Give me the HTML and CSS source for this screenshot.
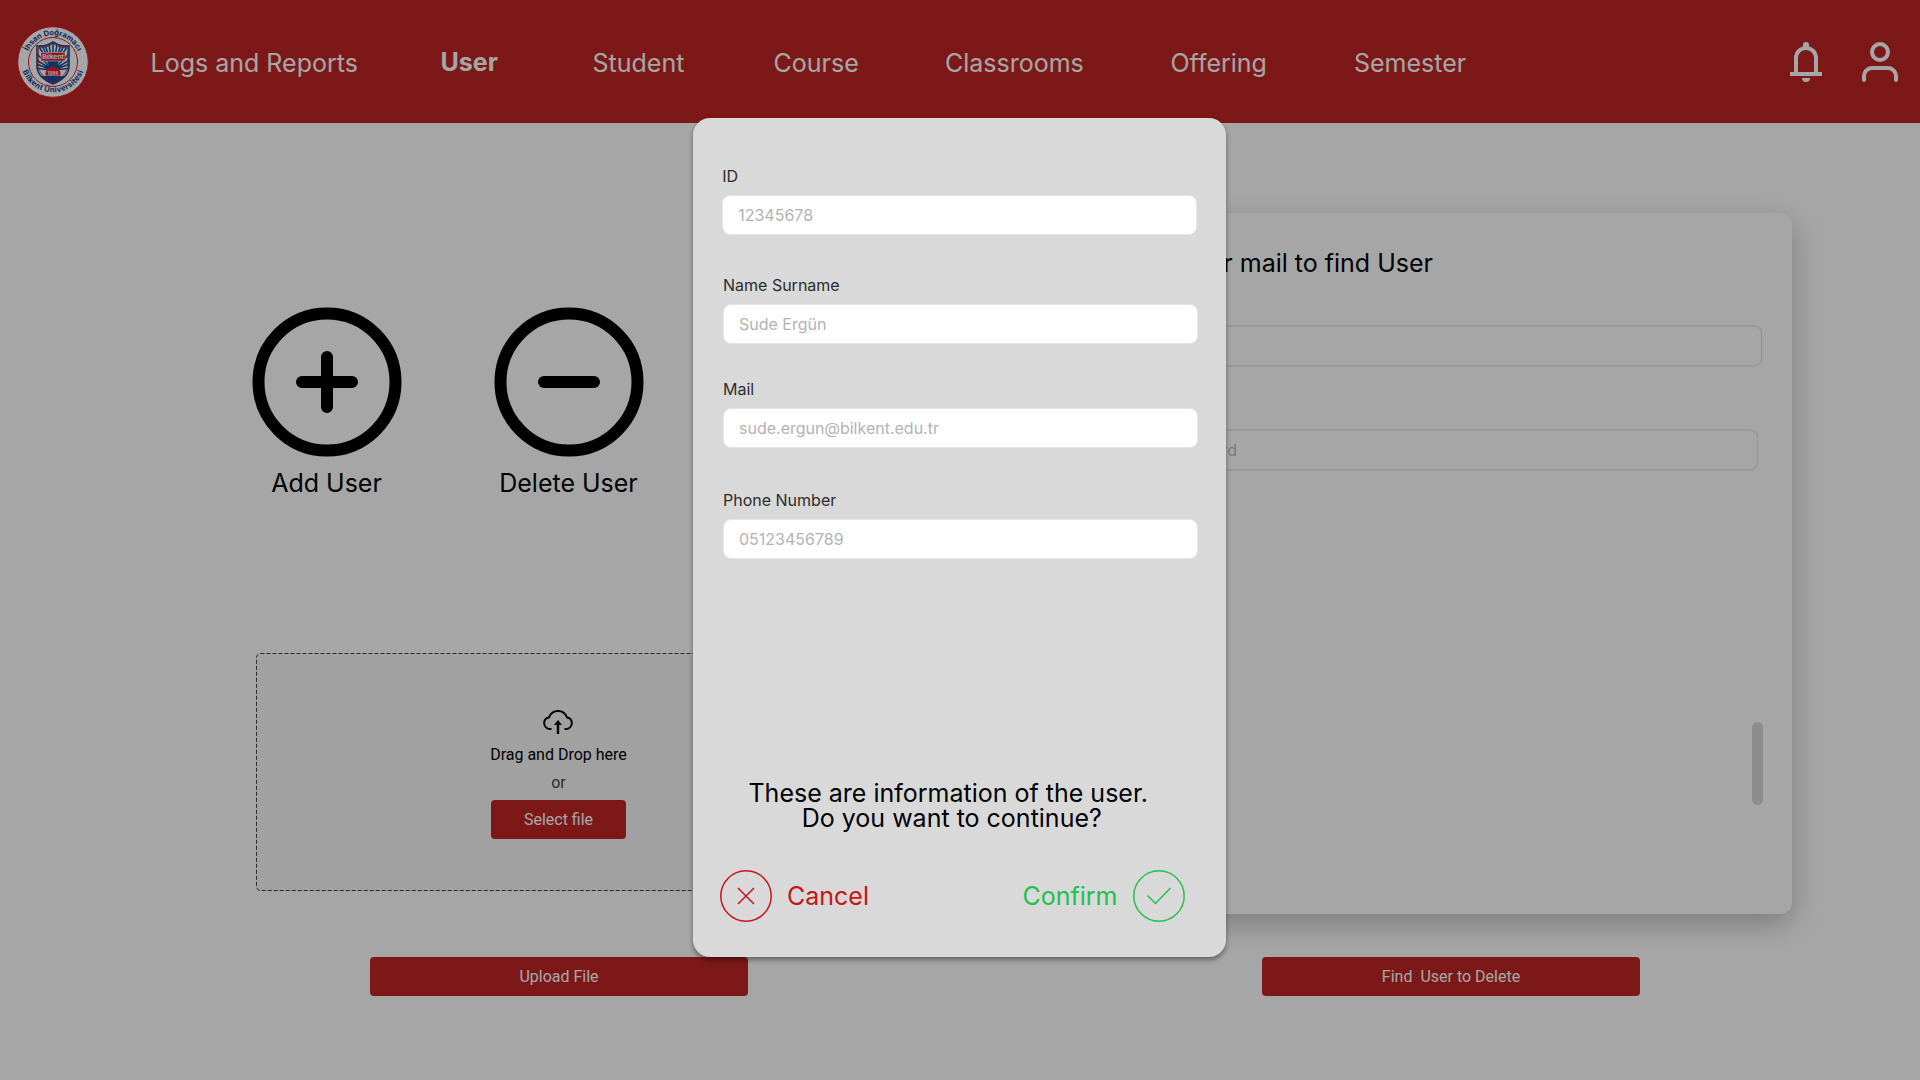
FILE: index.html
```html
<!DOCTYPE html>
<html lang="en">
<head>
<meta charset="utf-8">
<title>User</title>
<link rel="stylesheet" href="styles.css">
</head>
<body>
<header class="header">
  <svg class="logo" viewBox="0 0 72 72">
    <defs>
      <path id="arc-top" d="M9.2 36a26.8 26.8 0 0 1 53.6 0"/>
      <path id="arc-bottom" d="M3.6 34a32.4 32.4 0 0 0 64.8 0"/>
      <clipPath id="shield"><path d="M20 20q9 1 16-4 7 5 16 4v21q-1 11-16 17-15-6-16-17z"/></clipPath>
    </defs>
    <circle cx="36" cy="36" r="35.3" fill="#fff" stroke="#e0202f" stroke-width="1"/>
    <circle cx="36" cy="36" r="24.5" fill="none" stroke="#e0202f" stroke-width="1"/>
    <g clip-path="url(#shield)">
      <rect x="18" y="14" width="36" height="46" fill="#fff"/>
      <path stroke="#0d4f9c" stroke-width="1.5" fill="none" d="M36 44 18 14M36 44 22 12M36 44 26 12M36 44 31 12M36 44V12M36 44 41 12M36 44 46 12M36 44 50 12M36 44 54 14M36 44 16 24M36 44 56 24M36 44 16 32M36 44 56 32M36 44 16 37M36 44 56 37M36 44 16 42M36 44 56 42"/>
      <path d="M18 50h36v10H18z" fill="#0d4f9c"/>
      <path d="M28.500 49.500v-2a7.500 7 0 0 1 15 0v2z" fill="#e0202f"/>
    </g>
    <path d="M20 20q9 1 16-4 7 5 16 4v21q-1 11-16 17-15-6-16-17z" fill="none" stroke="#0d4f9c" stroke-width="1.600"/>
    <path d="M21.600 21.600q8 .8 14.400-3.600 6.400 4.400 14.400 3.600v19q-1 10-14.400 15.600-13.400-5.600-14.400-15.600z" fill="none" stroke="#e0202f" stroke-width=".8"/>
    <path d="M24 26.500h24v8.500h-24z" fill="#e0202f" stroke="#fff" stroke-width=".6"/>
    <text class="logo-name" x="36" y="33">Bilkent</text>
    <text class="logo-year" x="36" y="48.500">1984</text>
    <text class="logo-ring ring-top"><textPath href="#arc-top" startOffset="50%">İhsan Doğramacı</textPath></text>
    <text class="logo-ring ring-bottom"><textPath href="#arc-bottom" startOffset="50%">Bilkent Üniversitesi</textPath></text>
  </svg>
  <nav class="nav">
    <a>Logs and Reports</a><a class="active">User</a><a>Student</a><a>Course</a><a>Classrooms</a><a>Offering</a><a>Semester</a>
  </nav>
  <div class="tools">
    <svg width="32" height="40" viewBox="0 0 32 40"><path d="M6 31V16a10 10 0 0 1 20 0v15" fill="none" stroke="#fff" stroke-width="4"/><path d="M0 30h32v4H0zM12 36h8a4 4 0 0 1-8 0zM13 6V3a3 3 0 0 1 6 0v3z" fill="#fff"/></svg>
    <svg width="36" height="40" viewBox="0 0 36 40" fill="none" stroke="#fff" stroke-width="4"><circle cx="18" cy="10" r="8"/><path d="M2 38v-4a8 8 0 0 1 8-8h16a8 8 0 0 1 8 8v4" stroke-linecap="round"/></svg>
  </div>
</header>
<main class="main">
  <section class="left">
    <div class="actions">
      <div class="action">
        <svg width="150" height="150" viewBox="0 0 150 150" fill="none" stroke="#000" stroke-width="12" stroke-linecap="round"><circle cx="75" cy="75" r="68.500"/><path d="M50 75h50M75 50v50"/></svg>
        <span>Add User</span>
      </div>
      <div class="action">
        <svg width="150" height="150" viewBox="0 0 150 150" fill="none" stroke="#000" stroke-width="12" stroke-linecap="round"><circle cx="75" cy="75" r="68.500"/><path d="M50 75h50"/></svg>
        <span>Delete User</span>
      </div>
    </div>
    <div class="drop">
      <svg class="drop-border" width="605" height="238"><rect x=".5" y=".5" width="604" height="237" rx="4"/></svg>
      <svg class="cloud" width="30" height="24" viewBox="0 0 30 24"><path d="M8.500 19H7A6 6 0 0 1 1.200 13.500C1 10.500 3 8.200 5.800 7.600 7.500 3.500 11 1 15 1s7.500 2.500 9.200 6.600c2.800.6 4.800 2.900 4.600 5.900A6 6 0 0 1 23 19h-1.500" fill="none" stroke="#000" stroke-width="2"/><path d="M15 10l4 5h-2.800v9h-2.400v-9H11z"/></svg>
      <span class="drop-title">Drag and Drop here</span>
      <span class="drop-or">or</span>
      <button class="btn btn-small">Select file</button>
    </div>
    <button class="btn">Upload File</button>
  </section>
  <section class="right">
    <div class="panel">
      <h2 class="panel-title">Enter ID or mail to find User</h2>
      <div class="search"></div>
      <div class="search search-second"><span>Enter keyword</span></div>
      <div class="scrollbar"></div>
    </div>
    <button class="btn">Find&nbsp; User to Delete</button>
  </section>
</main>
<div class="overlay">
  <div class="modal">
    <div class="field field-id"><label>ID</label><div class="input">12345678</div></div>
    <div class="field field-name"><label>Name Surname</label><div class="input">Sude Ergün</div></div>
    <div class="field field-mail"><label>Mail</label><div class="input">sude.ergun@bilkent.edu.tr</div></div>
    <div class="field"><label>Phone Number</label><div class="input">05123456789</div></div>
    <p class="question">These are information of the user.&nbsp;<br>Do you want to continue?</p>
    <div class="choices">
      <div class="choice cancel">
        <svg width="52" height="52" viewBox="0 0 52 52" fill="none" stroke="currentColor" stroke-width="1.500"><circle cx="26" cy="26" r="25.200"/><path d="M18 18l16 16M34 18 18 34"/></svg>
        <span>Cancel</span>
      </div>
      <div class="choice confirm">
        <span>Confirm</span>
        <svg width="52" height="52" viewBox="0 0 52 52" fill="none" stroke="currentColor" stroke-width="1.500"><circle cx="26" cy="26" r="25.200"/><path d="M14.500 25.500l8 8L37.500 18"/></svg>
      </div>
    </div>
  </div>
</div>
</body>
</html>
```
FILE: styles.css
```css
* { box-sizing: border-box; }
body {
  margin: 0;
  width: 1920px;
  height: 1080px;
  overflow: hidden;
  position: relative;
  background: #fff;
  color: #000;
  font: 25px/30px Inter, "Liberation Sans", sans-serif;
}
svg { display: block; flex: none; }

.header {
  height: 123px;
  display: flex;
  align-items: center;
  padding: 0 22px 0 17px;
  background: #c02626;
  color: #fff;
}
.logo { width: 72px; height: 72px; }
.logo text { font-family: Inter, sans-serif; font-weight: 700; text-anchor: middle; }
.logo-name { font-size: 6.500px; fill: #fff; }
.logo-year { font-size: 4.500px; fill: #fff; }
.logo-ring { font-size: 7.600px; fill: #0d3f8c; }
.ring-top { letter-spacing: -.05px; }
.ring-bottom { letter-spacing: .35px; }
.nav {
  display: grid;
  grid-template-columns: 290px 152px 181px 171.500px 225.500px 183.500px auto;
  margin-left: 61.500px;
  padding-top: 3px;
}
.nav .active { font-weight: 700; margin-top: -1px; }
.tools { display: flex; gap: 40px; margin-left: auto; }

.main { display: flex; height: 957px; }
.left { width: 860px; padding: 184px 0 0 256px; }
.actions { display: flex; gap: 92px; margin-left: -4px; }
.action { width: 150px; display: flex; flex-direction: column; align-items: center; gap: 11px; white-space: nowrap; }
.action span { margin-right: 1px; }
.drop {
  position: relative;
  width: 605px;
  height: 238px;
  margin-top: 155px;
  padding-top: 57px;
  display: flex;
  flex-direction: column;
  align-items: center;
  background: #f8f8f8;
  border-radius: 4px;
  font: 16px/20px Roboto, sans-serif;
}
.drop-border { position: absolute; left: 0; top: 0; fill: none; stroke: #444; stroke-dasharray: 4 2; }
.cloud { margin-right: 1px; }
.drop-title { margin-top: 11px; }
.drop-or { margin-top: 8px; color: #444; }
.btn {
  display: block;
  width: 378px;
  height: 39px;
  border: 0;
  padding: 0;
  border-radius: 4px;
  background: #c02626;
  color: #fff;
  font: 16px/39px Roboto, sans-serif;
}
.btn-small { width: 135px; margin-top: 7px; }
.left > .btn { margin: 66px 0 0 114px; }

.right { margin-left: 250px; padding-top: 90px; }
.panel {
  width: 682px;
  height: 701px;
  padding: 35px 30px 0;
  border-radius: 12px;
  background: #fff;
  box-shadow: 0 10px 30px rgba(0, 0, 0, .25);
}
.panel-title {
  display: flex;
  justify-content: flex-end;
  margin: 0 329px 0 0;
  white-space: nowrap;
  font-size: 25px;
  font-weight: 400;
}
.search {
  width: 620px;
  height: 42px;
  margin: 47px 0 0 2px;
  border: solid #ebebeb;
  border-width: 2px 1px;
  border-right-color: #dedede;
  border-radius: 8px;
}
.search-second {
  margin: 62px 0 0 -2px;
  color: #c0c0c0;
  font-size: 16px;
  line-height: 38px;
}
.search-second span { display: flex; justify-content: flex-end; width: 98px; white-space: nowrap; }
.scrollbar { width: 11px; height: 83px; margin: 251px -1px 0 auto; border-radius: 6px; background: #d9d9d9; }
.right > .btn { margin: 43px 0 0 152px; }

.overlay {
  position: absolute;
  inset: 0;
  padding: 118px 0 0 693px;
  background: rgba(0, 0, 0, .35);
}
.modal {
  width: 533px;
  height: 839px;
  padding: 48px 28.500px 0 30px;
  border-radius: 17px;
  background: #d9d9d9;
  box-shadow: 0 3px 5px rgba(0, 0, 0, .4);
}
.field { font-size: 16px; line-height: 20px; color: #2c2c2c; }
.field label { display: block; }
.field-id { margin: 0 0 40px -.8px; }
.field-name { margin-bottom: 35px; }
.field-mail { margin-bottom: 42px; }
.input {
  width: 474.500px;
  height: 40px;
  margin-top: 9px;
  padding: 0 15px;
  border: 1px solid #e6e6e6;
  border-radius: 8px;
  background: #fff;
  color: #b3b3b3;
  line-height: 38px;
}
.question { margin: 222px 17px 0 0; text-align: center; line-height: 25px; }
.choices { display: flex; justify-content: space-between; align-items: center; margin: 39px 13px 0 -3px; }
.choice { display: flex; align-items: center; gap: 15px; }
.cancel { color: #c71414; }
.confirm { color: #22c04c; }
```
